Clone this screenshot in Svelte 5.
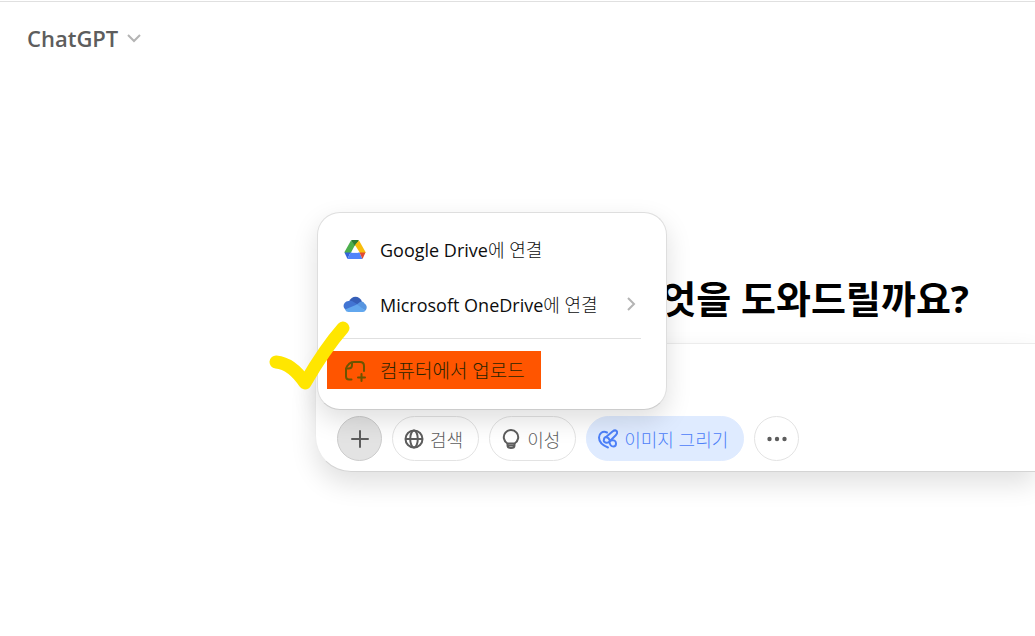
<script>
    let menuOpen = $state(true);
    let drawing = $state(true);
    let message = $state("");

    function toggleMenu() {
        menuOpen = !menuOpen;
    }
</script>

<header>
    <button class="model">
        ChatGPT
        <svg width="16" height="16" viewBox="0 0 16 16" fill="none" stroke="#b4b4b4" stroke-width="2">
            <path d="M2 5l6 6 6-6" />
        </svg>
    </button>
</header>

<main>
    <h1>무엇을 도와드릴까요?</h1>

    <form class="composer">
        <textarea aria-label="메시지" rows="1" bind:value={message}></textarea>

        <div class="tools">
            <div class="attach">
                <button type="button" class="round plus" aria-label="파일 추가" onclick={toggleMenu}>
                    <svg width="18" height="18" viewBox="0 0 18 18" stroke="currentColor" stroke-width="2" stroke-linecap="round">
                        <path d="M9 1v16M1 9h16" />
                    </svg>
                </button>

                {#if menuOpen}
                    <div class="menu">
                        <button type="button" class="item">
                            <svg width="24" height="24" viewBox="0 0 24 24">
                                <path fill="#4caf4c" d="M8 3.500 1.500 15 2 16.500H7.500L12 8z" />
                                <path fill="#2f7d32" d="M8 3.500q.5-.5 1-.5h6q.5 0 1 .5L12 9z" />
                                <path fill="#f8bd0c" d="M16 3.500 22.500 15v1H17L12 8z" />
                                <path fill="#3564d8" d="M1.500 15.500H7.500L4.500 22z" />
                                <path fill="#4f83fa" d="M7.500 15.500h9l3 6.500h-15z" />
                                <path fill="#e04a32" d="M16.500 15.500h6l-3 6.500z" />
                                <path fill="#fff" d="M12 9.500 15.500 15.700h-7z" />
                            </svg>
                            <span>Google Drive에 연결</span>
                        </button>
                        <button type="button" class="item">
                            <svg width="24" height="24" viewBox="0 0 24 24">
                                <path fill="#365fb8" d="M6 9.500C8.500 3 16.500 3 19 9.500L13 14z" />
                                <path fill="#4275d3" d="M3 18C-1 15.500 0 9.500 5.500 9q3-1 6 1.500l5 3L9 18z" />
                                <path fill="#5795e0" d="M12.500 13.500 17 10q3-1.500 4.500 1.500c2.500 1.500 3 4.500 1 7z" />
                                <path fill="#62a7ee" d="m2 17.500 12-5 8.500 6q-1 1.500-3 1.500H5.500Q3 20 2 17.500z" />
                            </svg>
                            <span>Microsoft OneDrive에 연결</span>
                            <svg class="next" width="16" height="16" viewBox="0 0 16 16" fill="none" stroke="#b4b4b4" stroke-width="2">
                                <path d="m3 2 6 6-6 6" />
                            </svg>
                        </button>
                        <hr />
                        <button type="button" class="item upload">
                            <svg width="24" height="24" viewBox="0 0 24 24" fill="none" stroke="#6b5400" stroke-width="2" stroke-linecap="round">
                                <path d="M8.500 21.500H6q-3 0-3-3v-7q0-3 2.500-5l1-1Q8 4 11 4h6q4 0 4 4v5" />
                                <path d="M3 10.500h2.500q3.500 0 3.500-3.500V4.500M18.500 16v7M15 19.500h7" />
                            </svg>
                            <span>컴퓨터에서 업로드</span>
                        </button>

                        <svg class="check" width="82" height="74" viewBox="0 0 82 74" fill="none" stroke="#ffe600" stroke-width="13" stroke-linecap="round" stroke-linejoin="round">
                            <path d="M8 42c11 1 21 9 29 21C48 44 60 25 75 8" />
                        </svg>
                    </div>
                {/if}
            </div>

            <button type="button" class="pill">
                <svg width="20" height="20" viewBox="0 0 20 20" fill="none" stroke="currentColor" stroke-width="2">
                    <circle cx="10" cy="10" r="8.500" />
                    <ellipse cx="10" cy="10" rx="3.800" ry="8.500" />
                    <path d="M1.500 10h17" />
                </svg>
                검색
            </button>
            <button type="button" class="pill">
                <svg width="20" height="20" viewBox="0 0 20 20" fill="none" stroke="currentColor" stroke-width="2">
                    <path d="M6.500 14.500a7.200 7.200 0 1 1 7 0z" />
                    <path d="M6.500 14v2.500q0 2.500 3.500 2.500t3.500-2.500V14M7 16.500h6" />
                </svg>
                이성
            </button>
            <button type="button" class="pill draw" class:active={drawing} onclick={() => (drawing = !drawing)}>
                <svg width="20" height="20" viewBox="0 0 20 20" fill="none" stroke="currentColor" stroke-width="2" stroke-linecap="round" stroke-linejoin="round">
                    <path d="M9 3.500C4.500 1.500 1 4.500 1 8.500c0 5.500 4 8 9 10" />
                    <path d="M8 8 14.500 2.500Q17 .5 18.500 2t-.5 4L12 12" />
                    <path d="M8 8q3 .5 4 4-2 2.500-4.500 1.500T6 10.500Q6 8.500 8 8z" />
                    <path d="M13 11.500q5-1 5 3 0 3-2.500 3-3.500 0-4-4.500" />
                </svg>
                이미지 그리기
            </button>
            <button type="button" class="round" aria-label="더 보기">
                <svg width="20" height="20" viewBox="0 0 20 20" fill="currentColor">
                    <circle cx="2.500" cy="10" r="2.200" />
                    <circle cx="10" cy="10" r="2.200" />
                    <circle cx="17.500" cy="10" r="2.200" />
                </svg>
            </button>
        </div>
    </form>
</main>

<style>
    :global(body) {
        display: flow-root;
        min-height: 100vh;
        background: #fff;
        font-family: "Open Sans", "Noto Sans CJK KR", sans-serif;
    }

    button {
        display: flex;
        align-items: center;
        border: none;
        background: none;
        padding: 0;
        font: inherit;
        color: inherit;
        cursor: pointer;
    }

    svg {
        flex: none;
    }

    header {
        border-top: 1px solid #e0e0e0;
        margin-top: 1px;
        padding: 20px 27px;
    }

    .model {
        gap: 8px;
        color: #5d5d5d;
        font-size: 22px;
        font-weight: 600;
        line-height: 32px;
    }

    main {
        margin-left: 315px;
        padding-top: 200px;
    }

    h1 {
        margin: 0 66px 21px 0;
        text-align: right;
        font-size: 38px;
        line-height: 48px;
        font-weight: 700;
        color: #000;
    }

    /* runs off the right side of the window */
    .composer {
        padding: 20px 0 10px 21px;
        border: 1px solid #ececec;
        border-bottom-color: #d4d4d4;
        border-right: none;
        border-radius: 36px 0 0 36px;
        background: #fff;
        box-shadow: 0 12px 26px rgba(0, 0, 0, 0.12);
    }

    textarea {
        display: block;
        box-sizing: border-box;
        width: 100%;
        height: 32px;
        margin-bottom: 20px;
        padding: 0;
        border: none;
        outline: none;
        resize: none;
        font: inherit;
    }

    .tools {
        display: flex;
        gap: 10px;
        color: #5d5d5d;
    }

    .attach {
        position: relative;
    }

    .round,
    .pill {
        box-sizing: border-box;
        height: 45px;
        border: 1px solid #e3e3e3;
        border-radius: 23px;
    }

    .round {
        width: 45px;
        justify-content: center;
    }

    .plus {
        background: #e3e3e3;
        border-color: #cccccc;
    }

    .pill {
        gap: 6px;
        padding: 0 15px 0 11px;
        font-size: 18px;
        font-weight: 300;
        white-space: nowrap;
    }

    .draw.active {
        border-color: #dfebff;
        background: #dfebff;
        color: #4d80f8;
    }

    .menu {
        position: absolute;
        left: -20px;
        bottom: 51px;
        z-index: 1;
        box-sizing: border-box;
        width: 350px;
        padding: 8px 9px 20px;
        border: 1px solid #dedede;
        border-bottom-color: #cccccc;
        border-radius: 23px;
        background: #fff;
        box-shadow: 0 10px 26px rgba(0, 0, 0, 0.13);
    }

    .item {
        box-sizing: border-box;
        width: 100%;
        height: 55px;
        gap: 13px;
        padding: 0 16px;
        color: #0d0d0d;
        font-family: "Open Sans", "Noto Sans CJK KR Light", "Noto Sans CJK KR", sans-serif;
        font-size: 18px;
        font-weight: 400;
        white-space: nowrap;
    }

    .next {
        margin-left: auto;
    }

    hr {
        margin: 7px 16px 12px;
        border: none;
        border-top: 1px solid #e0e0e0;
    }

    .upload {
        width: 214px;
        height: 38px;
        background: #ff5500;
        color: #2b2400;
        font-size: 19px;
    }

    .check {
        position: absolute;
        left: -50px;
        top: 107px;
        pointer-events: none;
    }
</style>
